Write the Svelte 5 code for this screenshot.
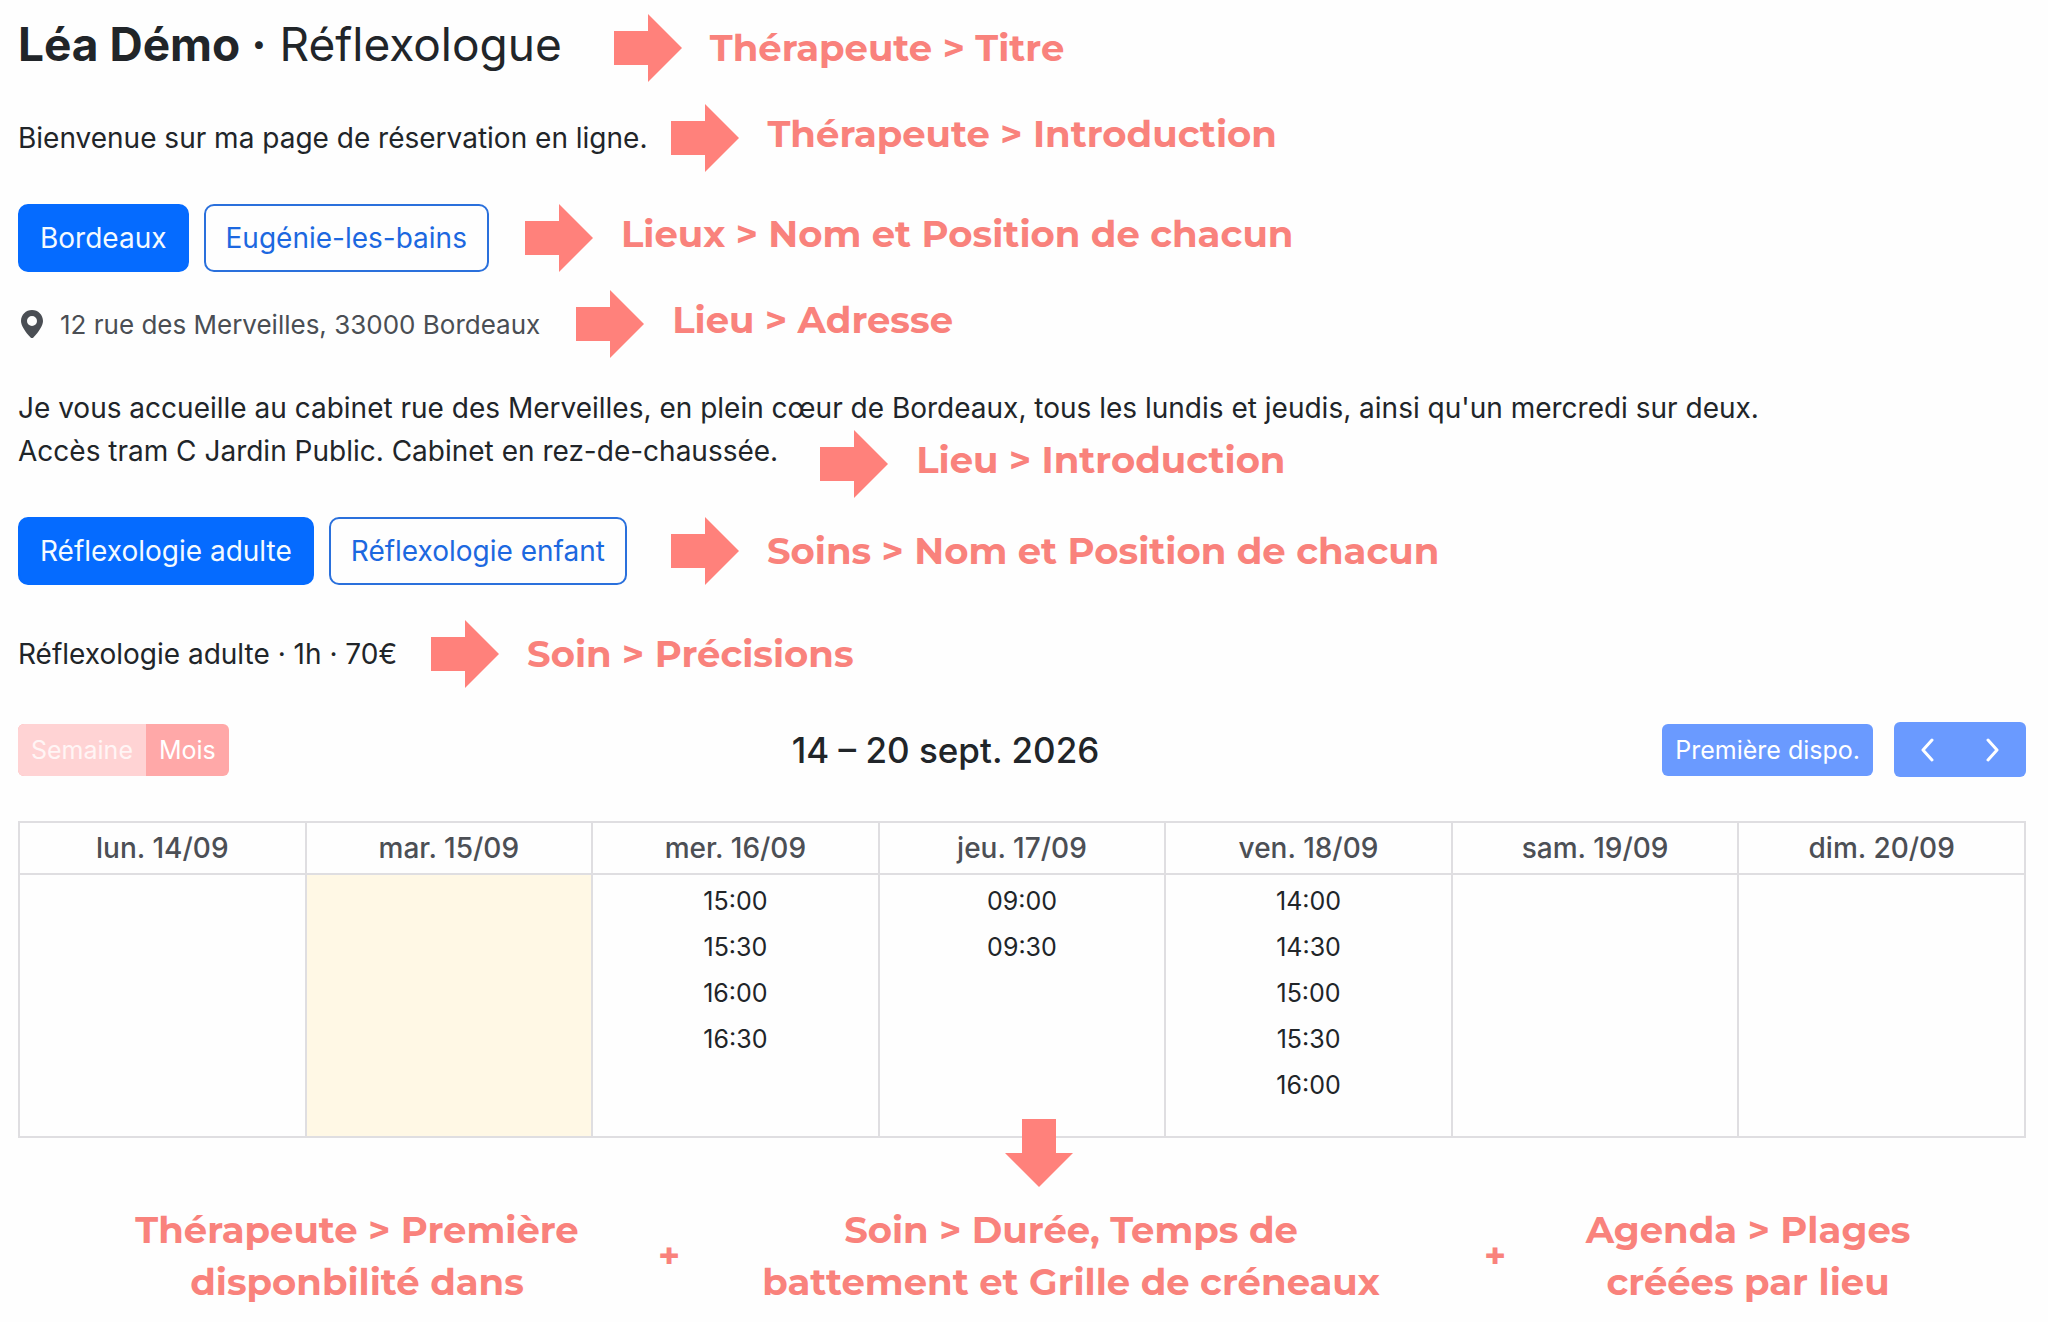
<script lang="ts">
	const places = ['Bordeaux', 'Eugénie-les-bains'];
	const treatments = ['Réflexologie adulte', 'Réflexologie enfant'];

	const days = [
		{ label: 'lun. 14/09', slots: [] },
		{ label: 'mar. 15/09', slots: [], today: true },
		{ label: 'mer. 16/09', slots: ['15:00', '15:30', '16:00', '16:30'] },
		{ label: 'jeu. 17/09', slots: ['09:00', '09:30'] },
		{ label: 'ven. 18/09', slots: ['14:00', '14:30', '15:00', '15:30', '16:00'] },
		{ label: 'sam. 19/09', slots: [] },
		{ label: 'dim. 20/09', slots: [] }
	];

	let place = $state('Bordeaux');
	let treatment = $state('Réflexologie adulte');
</script>

{#snippet note(text: string, raised = false)}
	<div class="note">
		<svg class="arrow" viewBox="0 0 68 68" aria-hidden="true">
			<path d="M0 17h34V0l34 34-34 34V51H0z" />
		</svg>
		<span class="note-text" class:raised>{text}</span>
	</div>
{/snippet}

<main>
	<header class="row">
		<h1><strong>Léa Démo ·</strong> Réflexologue</h1>
		{@render note('Thérapeute > Titre')}
	</header>

	<div class="row welcome">
		<p>Bienvenue sur ma page de réservation en ligne.</p>
		{@render note('Thérapeute > Introduction', true)}
	</div>

	<div class="row places">
		<div class="choices">
			{#each places as name}
				<button type="button" class="choice" class:active={name === place} onclick={() => (place = name)}>{name}</button>
			{/each}
		</div>
		{@render note('Lieux > Nom et Position de chacun', true)}
	</div>

	<div class="row">
		<address>
			<svg class="pin" viewBox="0 0 22 28" aria-hidden="true">
				<path
					fill-rule="evenodd"
					d="M11 0C4.900 0 0 4.900 0 11c0 4.500 4.300 11 9.400 16.300a2.200 2.200 0 0 0 3.200 0C17.700 22 22 15.500 22 11 22 4.900 17.100 0 11 0zm0 6a5 5 0 1 1 0 10 5 5 0 0 1 0-10z"
				/>
			</svg>
			12 rue des Merveilles, 33000 Bordeaux
		</address>
		{@render note('Lieu > Adresse', true)}
	</div>

	<div class="about">
		<p>
			Je vous accueille au cabinet rue des Merveilles, en plein cœur de Bordeaux, tous les lundis et jeudis, ainsi qu'un
			mercredi sur deux.
		</p>
		<div class="row access">
			<p>Accès tram C Jardin Public. Cabinet en rez-de-chaussée.</p>
			{@render note('Lieu > Introduction', true)}
		</div>
	</div>

	<div class="row treatments">
		<div class="choices">
			{#each treatments as name}
				<button type="button" class="choice" class:active={name === treatment} onclick={() => (treatment = name)}>{name}</button>
			{/each}
		</div>
		{@render note('Soins > Nom et Position de chacun')}
	</div>

	<div class="row details">
		<p>{treatment} · 1h · 70€</p>
		{@render note('Soin > Précisions')}
	</div>

	<div class="toolbar">
		<div class="views">
			<button type="button" class="week">Semaine</button>
			<button type="button">Mois</button>
		</div>
		<h2>14 – 20 sept. 2026</h2>
		<div class="actions">
			<button type="button" class="first">Première dispo.</button>
			<div class="pager">
				<button type="button" aria-label="Semaine précédente">
					<svg viewBox="0 0 14 24"><path d="M12 2 3 12l9 10" /></svg>
				</button>
				<button type="button" aria-label="Semaine suivante">
					<svg viewBox="0 0 14 24"><path d="m2 2 9 10-9 10" /></svg>
				</button>
			</div>
		</div>
	</div>

	<div class="calendar">
		<table>
			<thead>
				<tr>
					{#each days as day}
						<th scope="col">{day.label}</th>
					{/each}
				</tr>
			</thead>
			<tbody>
				<tr>
					{#each days as day}
						<td class:today={day.today}>
							{#each day.slots as slot}
								<button type="button" class="slot">{slot}</button>
							{/each}
						</td>
					{/each}
				</tr>
			</tbody>
		</table>
		<svg class="arrow down" viewBox="0 0 68 68" aria-hidden="true">
			<path d="M17 0h34v34h17L34 68 0 34h17z" />
		</svg>
	</div>

	<footer>
		<p>Thérapeute > Première<br />disponbilité dans</p>
		<span class="plus">+</span>
		<p>Soin > Durée, Temps de<br />battement et Grille de créneaux</p>
		<span class="plus">+</span>
		<p>Agenda > Plages<br />créées par lieu</p>
	</footer>
</main>

<style>
	:global(body) {
		margin: 0;
		background: #fefefe;
		color: #212529;
		font-family: Inter, 'Liberation Sans', sans-serif;
		font-size: 28px;
	}

	:global(*) {
		box-sizing: border-box;
	}

	main {
		padding: 14px 22px 12px 18px;
	}

	h1,
	h2,
	p {
		margin: 0;
		font-weight: 400;
	}

	p {
		line-height: 43px;
	}

	button {
		border: 0;
		padding: 0;
		background: none;
		color: inherit;
		font: inherit;
		cursor: pointer;
		white-space: nowrap;
	}

	.row {
		display: flex;
		align-items: center;
		gap: 36px;
		min-height: 68px;
	}

	header.row {
		gap: 52px;
	}

	h1 {
		padding-bottom: 8px;
		font-size: 46px;
		line-height: 60px;
	}

	h1 strong {
		font-weight: 700;
	}

	.note {
		display: flex;
		align-items: center;
		gap: 28px;
	}

	.arrow {
		flex: none;
		width: 68px;
		height: 68px;
		fill: #ff817b;
	}

	.note-text,
	footer {
		color: #f9827c;
		font-family: Montserrat, Inter, sans-serif;
		font-size: 37px;
		font-weight: 700;
		line-height: 52px;
		white-space: nowrap;
	}

	.raised {
		padding-bottom: 8px;
	}

	.row.welcome {
		gap: 24px;
		margin-top: 22px;
	}

	.places {
		margin-top: 32px;
		margin-bottom: 18px;
	}

	.choices {
		display: flex;
		gap: 15px;
	}

	.choice {
		height: 68px;
		padding: 0 20px;
		border: 2px solid #2a70dc;
		border-radius: 10px;
		color: #1c68e0;
		font-size: 28px;
	}

	.choice.active {
		border-color: #056bff;
		background: #056bff;
		color: #f4faff;
	}

	address {
		display: flex;
		align-items: center;
		gap: 17px;
		padding-left: 3px;
		color: #4a4e54;
		font-size: 26px;
		font-style: normal;
	}

	.pin {
		width: 22px;
		height: 28px;
		fill: #4a4e54;
	}

	.about {
		margin-top: 29px;
	}

	.row.access {
		align-items: flex-start;
		gap: 42px;
	}

	.row.treatments {
		gap: 44px;
		margin-top: 19px;
	}

	.row.details {
		gap: 34px;
		margin-top: 35px;
	}

	.toolbar {
		display: flex;
		align-items: center;
		justify-content: space-between;
		margin-top: 34px;
		color: #fff;
		font-size: 25px;
	}

	.views {
		display: flex;
		overflow: hidden;
		border-radius: 6px;
		background: #ffa8a8;
	}

	.views button,
	.first {
		height: 52px;
		padding: 0 13px;
	}

	.views .week {
		background: #ffd3d4;
		color: #fff5f5;
	}

	h2 {
		color: #212529;
		font-size: 35px;
		font-weight: 500;
	}

	.actions {
		display: flex;
		align-items: center;
		gap: 21px;
	}

	.first {
		border-radius: 6px;
		background: #6a9aff;
	}

	.pager {
		display: flex;
		border-radius: 6px;
		background: #6a9aff;
	}

	.pager button {
		display: grid;
		place-items: center;
		width: 66px;
		height: 55px;
	}

	.pager svg {
		width: 14px;
		height: 24px;
		fill: none;
		stroke: #fff;
		stroke-width: 3;
		stroke-linecap: round;
		stroke-linejoin: round;
	}

	.calendar {
		position: relative;
		margin-top: 44px;
	}

	table {
		width: 100%;
		border-collapse: collapse;
		table-layout: fixed;
	}

	th,
	td {
		border: 2px solid #dfdee1;
	}

	th {
		height: 52px;
		padding: 0;
		color: #4c4f55;
		font-size: 28px;
		font-weight: 500;
	}

	td {
		height: 263px;
		padding: 3px 0;
		vertical-align: top;
	}

	.today {
		background: #fff8e5;
	}

	.slot {
		display: block;
		width: 100%;
		height: 46px;
		font-size: 25px;
	}

	.down {
		position: absolute;
		left: calc(50% - 17px);
		bottom: -49px;
	}

	footer {
		display: grid;
		grid-template-columns:
			minmax(0, 458fr) minmax(0, 166fr) minmax(0, 638fr)
			minmax(0, 210fr) minmax(0, 296fr);
		align-items: center;
		justify-items: center;
		margin-top: 66px;
		padding: 0 130px 0 110px;
		text-align: center;
	}

	footer p {
		font-weight: 700;
		line-height: 52px;
	}

	.plus {
		font-size: 37px;
	}
</style>
